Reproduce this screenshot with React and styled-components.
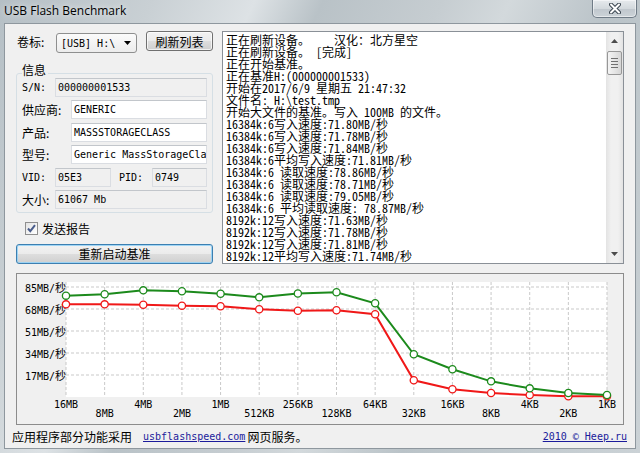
import React from 'react';
import styled, { createGlobalStyle } from 'styled-components';

const CJK = `"Noto Sans CJK SC", "Noto Sans", sans-serif`;
const MONO = `"DejaVu Sans Mono", "Noto Sans CJK SC", monospace`;
const LOGFONT = `"Noto Sans Mono CJK SC", "Noto Sans CJK SC", monospace`;

const GlobalStyle = createGlobalStyle`
  html, body { margin: 0; padding: 0; background: #c4cbd0; }
  body { font-family: ${CJK}; font-size: 12px; color: #000; }
`;

const logLines = [
  '正在刷新设备。    汉化：北方星空',
  '正在刷新设备。 [完成]',
  '正在开始基准。',
  '正在基准H:(000000001533)',
  '开始在2017/6/9 星期五 21:47:32',
  '文件名: H:\\test.tmp',
  '开始大文件的基准。写入 100MB 的文件。',
  '16384k:6写入速度:71.80MB/秒',
  '16384k:6写入速度:71.78MB/秒',
  '16384k:6写入速度:71.84MB/秒',
  '16384k:6平均写入速度:71.81MB/秒',
  '16384k:6 读取速度:78.86MB/秒',
  '16384k:6 读取速度:78.71MB/秒',
  '16384k:6 读取速度:79.05MB/秒',
  '16384k:6 平均读取速度: 78.87MB/秒',
  '8192k:12写入速度:71.63MB/秒',
  '8192k:12写入速度:71.78MB/秒',
  '8192k:12写入速度:71.81MB/秒',
  '8192k:12平均写入速度:71.74MB/秒',
];

const sizes = ['16MB', '8MB', '4MB', '2MB', '1MB', '512KB', '256KB', '128KB', '64KB', '32KB', '16KB', '8KB', '4KB', '2KB', '1KB'];
const readSpeed = [78.3, 79.4, 82.4, 81.7, 79.8, 77, 80, 81, 72.4, 33, 21.4, 12.1, 6.7, 3.1, 1.5];
const writeSpeed = [71.6, 71.6, 71.3, 70.6, 70.1, 67.8, 66.7, 67, 63.9, 12.9, 6, 3.1, 1.5, 0.5, 0.5];

// chart geometry, in page pixels (viewBox matches the group's inner box)
const X0 = 66, X1 = 607, YTOP = 282, Y0 = 397;
const px = i => X0 + (i * (X1 - X0)) / 14;
const py = v => Y0 - (v * 110) / 85;

function Chart() {
  const grid = [17, 34, 51, 68, 85];
  const pts = arr => arr.map((v, i) => `${px(i)},${py(v)}`).join(' ');
  return (
    <svg width="606" height="150" viewBox="17 274 606 150">
      <rect x={X0} y={YTOP} width={X1 - X0} height={Y0 - YTOP} fill="#fff" />
      {sizes.map((s, i) => (
        <line key={s} x1={px(i)} x2={px(i)} y1={YTOP} y2={Y0} stroke="#c9c9c9" strokeDasharray="3 2" />
      ))}
      {grid.map(v => (
        <line key={v} x1={X0} x2={X1} y1={py(v)} y2={py(v)} stroke="#c9c9c9" strokeDasharray="3 2" />
      ))}
      {grid.map(v => (
        <text key={v} x={66} y={py(v) + 5} textAnchor="end" fontFamily={MONO} fontSize="10">
          {v}MB/<tspan fontFamily={CJK} fontSize="11">秒</tspan>
        </text>
      ))}
      {sizes.map((s, i) => (
        <text key={s} x={px(i)} y={i % 2 ? 417 : 408} textAnchor="middle" fontFamily={MONO} fontSize="10">{s}</text>
      ))}
      <polyline points={pts(writeSpeed)} fill="none" stroke="#f01818" strokeWidth="2" />
      {writeSpeed.map((v, i) => (
        <circle key={i} cx={px(i)} cy={py(v)} r="3.6" fill="#fff" stroke="#f01818" strokeWidth="1.3" />
      ))}
      <polyline points={pts(readSpeed)} fill="none" stroke="#1c8a1c" strokeWidth="2" />
      {readSpeed.map((v, i) => (
        <circle key={i} cx={px(i)} cy={py(v)} r="3.6" fill="#fff" stroke="#1c8a1c" strokeWidth="1.3" />
      ))}
    </svg>
  );
}

function App() {
  return (
    <>
      <GlobalStyle />
      <Window>
        <TitleBar>
          <Title>USB Flash Benchmark</Title>
          <CloseButton>
            <svg width="12" height="11" viewBox="0 0 12 11">
              <path d="M2 1.5 L10 9.5 M10 1.5 L2 9.5" stroke="#3d4852" strokeWidth="4" strokeLinecap="round" />
              <path d="M2 1.5 L10 9.5 M10 1.5 L2 9.5" stroke="#fff" strokeWidth="2" strokeLinecap="round" />
            </svg>
          </CloseButton>
        </TitleBar>
        <Client>
          <TopRow>
            <LeftPanel>
              <VolumeRow>
                <VolumeLabel>卷标:</VolumeLabel>
                <Select>
                  <span>[USB] H:\</span>
                  <svg width="7" height="4" viewBox="0 0 7 4"><path d="M0 0 H7 L3.5 4 Z" fill="#000" /></svg>
                </Select>
                <Button $width={67}>刷新列表</Button>
              </VolumeRow>
              <Group>
                <GroupTitle>信息</GroupTitle>
                <FieldRow>
                  <Label $width={33} $mono>S/N:</Label>
                  <Field $grey>000000001533</Field>
                </FieldRow>
                <FieldRow>
                  <Label $width={49}>供应商:</Label>
                  <Field>GENERIC</Field>
                </FieldRow>
                <FieldRow>
                  <Label $width={49}>产品:</Label>
                  <Field>MASSSTORAGECLASS</Field>
                </FieldRow>
                <FieldRow>
                  <Label $width={49}>型号:</Label>
                  <Field>Generic MassStorageClass</Field>
                </FieldRow>
                <FieldRow>
                  <Label $width={33} $mono>VID:</Label>
                  <Field $grey $width={56}>05E3</Field>
                  <Label $width={33} $mono $gap={8}>PID:</Label>
                  <Field $grey>0749</Field>
                </FieldRow>
                <FieldRow>
                  <Label $width={33}>大小:</Label>
                  <Field $grey>61067 Mb</Field>
                </FieldRow>
              </Group>
              <CheckRow>
                <CheckBox>
                  <svg width="11" height="11" viewBox="0 0 11 11">
                    <path d="M2 5.5 L4.3 8.2 L9 2.2" fill="none" stroke="#4a5d8c" strokeWidth="2" />
                  </svg>
                </CheckBox>
                <span>发送报告</span>
              </CheckRow>
              <Button $default>重新启动基准</Button>
            </LeftPanel>
            <LogBox>
              <LogText>
                {logLines.map((l, i) => <LogLine key={i}>{l}</LogLine>)}
              </LogText>
              <ScrollBar>
                <ScrollArrow>
                  <svg width="7" height="4" viewBox="0 0 7 4"><path d="M0 4 H7 L3.5 0 Z" fill="#4d4d4d" /></svg>
                </ScrollArrow>
                <Thumb>
                  <Grip /><Grip /><Grip /><Grip />
                </Thumb>
                <Track />
                <ScrollArrow>
                  <svg width="7" height="4" viewBox="0 0 7 4"><path d="M0 0 H7 L3.5 4 Z" fill="#4d4d4d" /></svg>
                </ScrollArrow>
              </ScrollBar>
            </LogBox>
          </TopRow>
          <ChartGroup>
            <Chart />
          </ChartGroup>
          <Footer>
            <FooterLeft>
              <span>应用程序部分功能采用</span>
              <Link>usbflashspeed.com</Link>
              <span>网页服务。</span>
            </FooterLeft>
            <Link>2010 © Heep.ru</Link>
          </Footer>
        </Client>
      </Window>
    </>
  );
}

const Window = styled.div`
  width: 640px;
  height: 453px;
  box-sizing: border-box;
  padding: 0 4px 4px 4px;
  display: flex;
  flex-direction: column;
  overflow: hidden;
  background: linear-gradient(115deg, #b5bfc5 0%, #c9d0d4 18%, #dde2e5 30%, #b9c2c7 38%, #c6cdd1 52%, #d3d9dc 60%, #bac3c8 72%, #cbd2d6 100%);
`;

const TitleBar = styled.div`
  height: 23px;
  margin: 0 -4px;
  padding-left: 4px;
  display: flex;
  justify-content: space-between;
  align-items: flex-start;
`;

const Title = styled.div`
  font-family: "Open Sans", "Noto Sans", sans-serif;
  font-size: 12px;
  line-height: 22px;
  color: #000;
  text-shadow: 0 0 6px rgba(255, 255, 255, 0.9);
`;

const CloseButton = styled.div`
  width: 45px;
  height: 18px;
  margin-right: 3px;
  box-sizing: border-box;
  border: 1px solid #6f7b86;
  border-top: none;
  border-radius: 0 0 5px 5px;
  background: linear-gradient(#e6eaed 0%, #d3d9dd 50%, #c0c7cd 51%, #ccd3d8 100%);
  box-shadow: inset 0 0 0 1px rgba(255, 255, 255, 0.5);
  display: flex;
  align-items: center;
  justify-content: center;
`;

const Client = styled.div`
  flex: 1;
  background: #f0f0f0;
  border: 1px solid #8e979e;
  padding: 7px 11px 0 11px;
  display: flex;
  flex-direction: column;
`;

const TopRow = styled.div`
  display: flex;
  gap: 9px;
  height: 233px;
`;

const LeftPanel = styled.div`
  width: 197px;
  display: flex;
  flex-direction: column;
`;

const VolumeRow = styled.div`
  display: flex;
  align-items: flex-start;
  height: 22px;
`;

const VolumeLabel = styled.div`
  width: 39px;
  margin-left: 1px;
  line-height: 22px;
`;

const Select = styled.div`
  width: 81px;
  height: 20px;
  margin-top: 2px;
  box-sizing: border-box;
  border: 1px solid #8e8f8f;
  border-radius: 3px;
  background: linear-gradient(#fbfbfb, #ececec);
  display: flex;
  align-items: center;
  justify-content: space-between;
  padding: 0 5px 0 4px;
  font-family: ${MONO};
  font-size: 10px;
`;

const Button = styled.div`
  width: ${p => (p.$width ? `${p.$width}px` : '100%')};
  height: 20px;
  margin-left: ${p => (p.$width ? '9px' : '0')};
  margin-top: ${p => (p.$default ? '9px' : '0')};
  box-sizing: border-box;
  border: 1px solid ${p => (p.$default ? '#3c7fb1' : '#707070')};
  border-radius: 3px;
  background: linear-gradient(#f2f2f2 0%, #ebebeb 48%, #dddddd 52%, #cfcfcf 100%);
  box-shadow: inset 0 0 0 1px ${p => (p.$default ? 'rgba(150, 210, 245, 0.9)' : 'rgba(255, 255, 255, 0.7)')};
  display: flex;
  align-items: center;
  justify-content: center;
  font-size: 12px;
`;

const Group = styled.div`
  margin-top: 20px;
  border: 1px solid #d5dfe5;
  border-radius: 3px;
  padding: 0 5px 3px 5px;
  display: flex;
  flex-direction: column;
  gap: 3.4px;
`;

const GroupTitle = styled.div`
  align-self: flex-start;
  margin-top: -11px;
  margin-bottom: -2.4px;
  padding-right: 2px;
  line-height: 14px;
  background: #f0f0f0;
`;

const FieldRow = styled.div`
  display: flex;
  align-items: center;
  height: 19px;
`;

const Label = styled.div`
  width: ${p => p.$width}px;
  margin-left: ${p => p.$gap || 0}px;
  flex-shrink: 0;
  font-family: ${p => (p.$mono ? MONO : CJK)};
  font-size: ${p => (p.$mono ? '10px' : '12px')};
`;

const Field = styled.div`
  ${p => (p.$width ? `width: ${p.$width}px;` : 'flex: 1;')}
  height: 19px;
  box-sizing: border-box;
  min-width: 0;
  overflow: hidden;
  white-space: nowrap;
  padding: 0 2px;
  border: 1px solid #dadde2;
  border-top-color: #c2c6cb;
  background: ${p => (p.$grey ? '#f0f0f0' : '#fff')};
  font-family: ${MONO};
  font-size: 10px;
  line-height: 17px;
`;

const CheckRow = styled.div`
  display: flex;
  align-items: center;
  gap: 4px;
  margin-top: 9px;
  padding-left: 9px;
  height: 13px;
`;

const CheckBox = styled.div`
  width: 13px;
  height: 13px;
  box-sizing: border-box;
  border: 1px solid #8f8f8f;
  background: linear-gradient(135deg, #e4e4e4, #ffffff);
  display: flex;
  align-items: center;
  justify-content: center;
`;

const LogBox = styled.div`
  flex: 1;
  border: 1px solid #8a9097;
  background: #fff;
  display: flex;
  min-width: 0;
`;

const LogText = styled.div`
  flex: 1;
  padding: 2px 3px;
  overflow: hidden;
  font-family: ${LOGFONT};
  font-size: 12px;
  line-height: 12px;
`;

const LogLine = styled.div`
  white-space: pre;
  height: 12px;
`;

const ScrollBar = styled.div`
  width: 17px;
  display: flex;
  flex-direction: column;
  background: linear-gradient(90deg, #e3e3e3, #f0f0f0 30%, #f0f0f0 70%, #e3e3e3);
`;

const ScrollArrow = styled.div`
  height: 18px;
  display: flex;
  align-items: center;
  justify-content: center;
`;

const Thumb = styled.div`
  height: 24px;
  margin: 1px 1px 0 1px;
  box-sizing: border-box;
  border: 1px solid #979797;
  border-radius: 2px;
  background: linear-gradient(90deg, #f4f4f4, #e6e6e6 50%, #d6d6d6);
  display: flex;
  flex-direction: column;
  align-items: center;
  justify-content: center;
  gap: 2px;
`;

const Grip = styled.div`
  width: 7px;
  height: 1px;
  background: #707070;
`;

const Track = styled.div`
  flex: 1;
`;

const ChartGroup = styled.div`
  margin-top: 9px;
  height: 152px;
  box-sizing: border-box;
  border: 1px solid #8c8c8c;
  display: flex;
`;

const Footer = styled.div`
  flex: 1;
  margin: 0 -3px 0 -4px;
  display: flex;
  align-items: center;
  justify-content: space-between;
  font-size: 12px;
`;

const FooterLeft = styled.div`
  display: flex;
  align-items: center;
  gap: 0;
  span:first-child { margin-right: 11px; }
  span:last-child { margin-left: 2px; }
`;

const Link = styled.span`
  font-family: ${MONO};
  font-size: 10px;
  color: #1b1b9b;
  text-decoration: underline;
`;

export default App;
